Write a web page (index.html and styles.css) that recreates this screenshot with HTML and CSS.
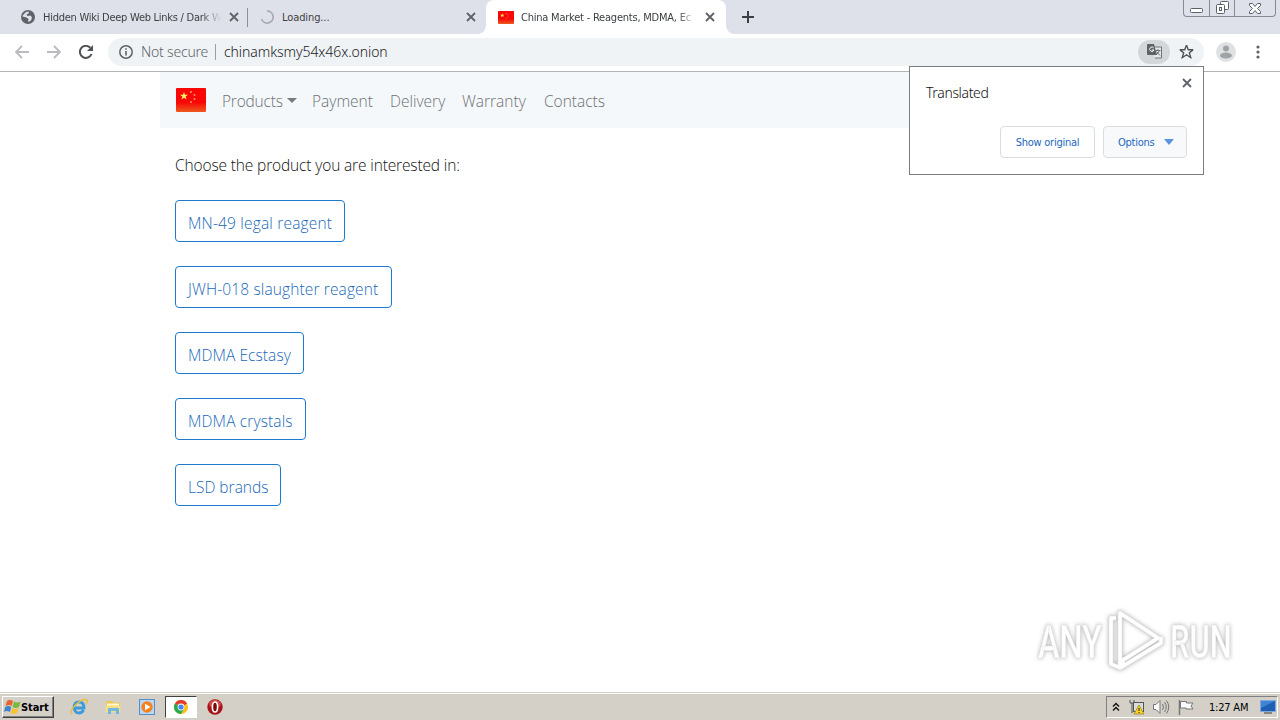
FILE: index.html
```html
<!DOCTYPE html>
<html lang="en">
<head>
    <meta charset="UTF-8">
    <title>China Market - Reagents, MDMA, Ecstasy</title>
    <link rel="stylesheet" href="styles.css">
</head>
<body>
    <svg class="defs" width="0" height="0">
        <symbol id="close" viewBox="0 0 10 10"><path d="M1 1l8 8M9 1l-8 8" stroke="#5f6368" stroke-width="1.8"/></symbol>
        <symbol id="star" viewBox="0 0 20 20"><path d="M10 0l2.6 7H20l-5.9 4.4 2.2 7.2L10 14.300l-6.300 4.300 2.200-7.200L0 7h7.400z"/></symbol>
        <linearGradient id="red" x2="0" y2="1"><stop offset=".6" stop-color="#f90606"/><stop offset="1" stop-color="#ee5a20"/></linearGradient>
        <symbol id="flag" viewBox="0 0 30 24">
            <rect width="30" height="24" rx="1" fill="url(#red)"/>
            <use href="#star" x="4" y="4" width="8" height="8" fill="#ffee60"/>
            <g fill="#ff9a50"><circle cx="15" cy="4" r="1"/><circle cx="18.500" cy="7" r="1"/><circle cx="18.500" cy="11" r="1"/><circle cx="15" cy="14" r="1"/></g>
        </symbol>
    </svg>

    <div class="tabstrip">
        <div class="tab tab-first">
            <svg class="favicon" viewBox="0 0 14 14"><circle cx="7" cy="7" r="7" fill="#5f6368"/><path d="M2 5l3-3 3-.5-.5 2-2 1 1 1.500 3-.5 1.500 2-1 3-3 1.500.5-3-2-1.500-2-.5-2-.5z" fill="#dee1e9"/></svg>
            <span class="tab-title fade">Hidden Wiki Deep Web Links / Dark W</span>
            <svg class="close"><use href="#close"/></svg>
        </div>
        <div class="tab tab-loading">
            <svg class="favicon" viewBox="0 0 14 14"><path d="M7 1a6 6 0 1 1-5.500 8" fill="none" stroke="#a9adb3" stroke-width="1.800"/></svg>
            <span class="tab-title">Loading...</span>
            <svg class="close"><use href="#close"/></svg>
        </div>
        <div class="tab tab-active">
            <svg class="favicon-flag"><use href="#flag"/></svg>
            <span class="tab-title fade">China Market - Reagents, MDMA, Ec</span>
            <svg class="close"><use href="#close"/></svg>
        </div>
        <svg class="new-tab" viewBox="0 0 12 12"><path d="M6 0v12M0 6h12" stroke="#3c4043" stroke-width="2"/></svg>
        <div class="window-buttons">
            <span><svg width="13" height="6"><rect x=".5" y=".5" width="12" height="4" rx="1" fill="#fff" stroke="#5c6069"/></svg></span>
            <span><svg width="13" height="13" fill="#fff" stroke="#5c6069"><rect x="4.500" y=".5" width="8" height="8" rx="1"/><rect x=".5" y="3.500" width="8" height="9" rx="1"/><rect x="3.500" y="6.500" width="2" height="3"/></svg></span>
            <span><svg width="12" height="11"><path d="M.5.5h3L6 3.500 8.500.5h3v2l-3 3 3 3v2h-3L6 7.500 3.500 10.500h-3v-2l3-3-3-3z" fill="#fff" stroke="#5c6069"/></svg></span>
        </div>
    </div>

    <div class="toolbar">
        <svg class="nav-icon" viewBox="0 0 14 14"><path d="M14 7H1M7 1L1 7l6 6" class="arrow"/></svg>
        <svg class="nav-icon" viewBox="0 0 14 14"><path d="M0 7h13M7 1l6 6-6 6" class="arrow"/></svg>
        <svg class="nav-icon" viewBox="0 0 14 14"><path d="M12.500 9A6 6 0 1 1 11.300 2.800" fill="none" stroke="#4f5357" stroke-width="2"/><path d="M14 0v6H8z" fill="#4f5357"/></svg>
        <div class="omnibox">
            <svg class="info" viewBox="0 0 14 14"><circle cx="7" cy="7" r="6.200" fill="none" stroke="#5f6368" stroke-width="1.500"/><path d="M7 6v4.500M7 3.200v1.600" stroke="#5f6368" stroke-width="1.600"/></svg>
            <span class="not-secure">Not secure</span>
            <span class="url">chinamksmy54x46x.onion</span>
            <span class="translate-chip">
                <svg width="15" height="15" viewBox="0 0 15 15"><path d="M6 3h8.500v11H8" fill="#e4e6e8" stroke="#70757a"/><path d="M8.500 6.500h5M11 5v1.500M12.500 6.500q-1 3-3.500 4M9.500 7.500l3.500 4" stroke="#70757a" fill="none"/><path d="M1 0h6l3 11H1q-1 0-1-1V1q0-1 1-1z" fill="#5f6368"/><path d="M6.800 4A2.200 2.200 0 1 0 7 6H5" fill="none" stroke="#fff"/></svg>
            </span>
            <svg class="bookmark" viewBox="-1 -1 22 21"><use href="#star" width="20" height="20" fill="none" stroke="#4f5357" stroke-width="2"/></svg>
        </div>
        <svg class="avatar" viewBox="0 0 20 20"><circle cx="10" cy="10" r="10" fill="#dfe1e3"/><circle cx="10" cy="6.500" r="3" fill="#a0a3a6"/><ellipse cx="10" cy="13.500" rx="6" ry="3" fill="#a0a3a6"/></svg>
        <svg class="menu" viewBox="0 0 4 14" fill="#5f6368"><circle cx="2" cy="2" r="1.600"/><circle cx="2" cy="7" r="1.600"/><circle cx="2" cy="12" r="1.600"/></svg>
    </div>

    <div class="page">
        <div class="container">
            <nav class="navbar">
                <svg class="brand"><use href="#flag"/></svg>
                <a class="dropdown n1">Products</a>
                <a class="n2">Payment</a>
                <a class="n3">Delivery</a>
                <a class="n4">Warranty</a>
                <a class="n5">Contacts</a>
            </nav>
            <div class="content">
                <p>Choose the product you are interested in:</p>
                <a class="btn b1">MN-49 legal reagent</a>
                <a class="btn b2">JWH-018 slaughter reagent</a>
                <a class="btn b3">MDMA Ecstasy</a>
                <a class="btn b4">MDMA crystals</a>
                <a class="btn b5">LSD brands</a>
            </div>
        </div>
    </div>

    <div class="translate-popup">
        <div class="popup-head">
            <span>Translated</span>
            <svg class="close"><use href="#close"/></svg>
        </div>
        <div class="popup-actions">
            <span class="popup-btn show-original">Show original</span>
            <span class="popup-btn options">Options<i></i></span>
        </div>
    </div>

    <div class="watermark">
        <span class="any">ANY</span>
        <svg width="58" height="64" viewBox="0 0 58 64" fill="none" stroke-linejoin="round">
            <g class="mark-shadow"><path d="M13 4v49l38-24z"/><path d="M9 9H4v46l7 3 7-4M13 53v6l41-25v-6"/></g>
            <g class="mark"><path d="M13 4v49l38-24z"/><path d="M9 9H4v46l7 3 7-4M13 53v6l41-25v-6"/></g>
        </svg>
        <span class="run">RUN</span>
    </div>

    <div class="taskbar">
        <div class="start">
            <svg width="17" height="16" viewBox="0 0 17 16"><path d="M3 2q3-2 6 0L7.500 7Q5 5 1.500 7z" fill="#e8622c"/><path d="M10 2.500q3 2 6.500 0L15 8q-3 2-6.500 0z" fill="#7cb83e"/><path d="M1.200 8q3-2 6 0L6 13q-3-2-6 0z" fill="#3e83d0"/><path d="M8.200 9q3 2 6.500 0L13 14q-3 2-6.300 0z" fill="#f7c331"/></svg>
            <span>Start</span>
        </div>
        <div class="task"><svg width="18" height="18" viewBox="0 0 18 18" fill="none"><path d="M4 10h10q0-6-5-6t-5 6q1 5 5 5 3 0 4.500-3" stroke="#3a9bdc" stroke-width="2.800"/><path d="M2 16Q-1 13 6 6.500T17 2q1 1-1 4" stroke="#e9bf3b" stroke-width="1.500"/></svg></div>
        <div class="task"><svg width="18" height="18" viewBox="0 0 18 18"><path d="M2 3h6l1 1.500h7V14H2z" fill="#e9c95f"/><path d="M3 5.500h12V9H3z" fill="#fff7c6"/><path d="M1.500 7.500h15V14h-15z" fill="#f5dd86"/><path d="M4 16v-5q0-1 1-1h9q1 0 1 1v5h-3v-3H7v3z" fill="#6fb9e0"/></svg></div>
        <div class="task"><svg width="16" height="16" viewBox="0 0 16 16"><rect x=".5" y=".5" width="15" height="15" fill="#b9d7f1" stroke="#548fcb"/><circle cx="8" cy="8" r="5.700" fill="#f48120"/><path d="M6 4.700L11.500 8 6 11.300z" fill="#fff"/></svg></div>
        <div class="task active"><svg width="14" height="14" viewBox="0 0 14 14"><circle cx="7" cy="7" r="7" fill="#fbc116"/><path d="M7 7L.9 3.500A7 7 0 0 1 13.100 3.500z" fill="#e33b2e"/><path d="M7 7L.9 3.500A7 7 0 0 0 7 14l3-5z" fill="#2da94f"/><circle cx="7" cy="7" r="3.400" fill="#fff"/><circle cx="7" cy="7" r="2.600" fill="#4285f4"/></svg></div>
        <div class="task"><svg width="16" height="16" viewBox="0 0 16 16"><circle cx="8" cy="8" r="7.700" fill="#a81319"/><ellipse cx="8" cy="5" rx="6" ry="4" fill="#d04b4b"/><ellipse cx="8" cy="8" rx="2.600" ry="5" fill="#7d080c" stroke="#fff" stroke-width="1.600"/></svg></div>
        <div class="tray">
            <svg width="8" height="10" viewBox="0 0 8 10"><path d="M1 4.500l3-3 3 3M1 8.500l3-3 3 3" fill="none" stroke="#111" stroke-width="1.400"/></svg>
            <svg width="17" height="16" viewBox="0 0 17 16"><path d="M2 1v3h4V1M4 4v10" fill="none" stroke="#555"/><rect x="5.500" y="3.500" width="10" height="9" fill="#d8dcd8" stroke="#555"/><path d="M11 6l5 9H6z" fill="#f8d32a" stroke="#9a8010" stroke-width=".7"/><path d="M11 9v3M11 13v1" stroke="#222"/></svg>
            <svg width="17" height="16" viewBox="0 0 17 16" fill="none" stroke="#777"><path d="M.5 5.500H3l4-4v13l-4-4H.5z" fill="#fafafa"/><path d="M9.500 5q2 3 0 6M11.500 3q3.500 5 0 10M13.500 1.500q4.500 6.500 0 13"/></svg>
            <svg width="16" height="16" viewBox="0 0 16 16"><path d="M1.500 1v15" stroke="#777" stroke-width="1.500"/><path d="M2.500 2.500h6v1.500H15l-2 3 2 3H8V9H2.500z" fill="#fafafa" stroke="#777"/></svg>
            <span class="clock">1:27 AM</span>
            <svg width="16" height="14" viewBox="0 0 16 14"><path d="M.5.500h15v11H.5z" fill="#1d5fb5" stroke="#7ea9dc"/><path d="M1 1h14L1 8z" fill="#3f83d2"/><path d="M4 13h8" stroke="#6b6b6b" stroke-width="1.500"/></svg>
        </div>
    </div>
</body>
</html>
```
FILE: styles.css
```css
* {
    box-sizing: border-box;
}

body {
    margin: 0;
    width: 1280px;
    height: 720px;
    display: flex;
    flex-direction: column;
    background-color: #fff;
    overflow: hidden;
    font-family: "DejaVu Sans Condensed", "DejaVu Sans", sans-serif;
}

svg {
    display: block;
    flex: none;
}

.defs {
    position: absolute;
}

.tabstrip {
    height: 34px;
    display: flex;
    align-items: center;
    background-color: #dee1e9;
    position: relative;
}

.tab {
    display: flex;
    align-items: center;
    height: 34px;
    font-size: 11px;
    color: #3c4043;
}

.tab-first {
    width: 248px;
    padding: 0 11px 0 21px;
    position: relative;
}

.tab-first::after {
    content: "";
    position: absolute;
    right: 0;
    top: 8px;
    width: 1px;
    height: 19px;
    background-color: #8b8e94;
}

.tab-loading {
    width: 238px;
    padding: 0 10px 0 12px;
}

.tab-active {
    width: 240px;
    padding: 0 11px 0 12px;
    background-color: #fff;
    border-radius: 8px 8px 0 0;
    position: relative;
}

.tab-active::before,
.tab-active::after {
    content: "";
    position: absolute;
    bottom: 0;
    width: 8px;
    height: 8px;
}

.tab-active::before {
    left: -8px;
    background: radial-gradient(circle at 0 0, transparent 7.5px, #fff 8px);
}

.tab-active::after {
    right: -8px;
    background: radial-gradient(circle at 100% 0, transparent 7.5px, #fff 8px);
}

.favicon {
    width: 14px;
    height: 14px;
    margin-right: 8px;
}

.favicon-flag {
    width: 16px;
    height: 13px;
    margin-right: 7px;
}

.tab-title {
    flex: 1;
    white-space: nowrap;
    margin-right: 8px;
    letter-spacing: -0.26px;
}

.tab-active .tab-title {
    letter-spacing: -0.22px;
}

.tab-loading .tab-title {
    letter-spacing: -0.1px;
}

.fade {
    -webkit-mask-image: linear-gradient(to right, #000 calc(100% - 20px), transparent);
    mask-image: linear-gradient(to right, #000 calc(100% - 20px), transparent);
}

.close {
    width: 10px;
    height: 10px;
}

.new-tab {
    width: 12px;
    height: 12px;
    margin-left: 16px;
}

.window-buttons {
    display: flex;
    align-self: flex-start;
    margin-left: auto;
    margin-right: 4px;
    height: 17px;
    border: 1px solid #868a93;
    border-top: 0;
    border-radius: 0 0 4px 4px;
}

.window-buttons span {
    width: 25px;
    display: flex;
    justify-content: center;
    align-items: flex-end;
    padding-bottom: 2px;
}

.window-buttons span + span {
    border-left: 1px solid #868a93;
}

.window-buttons span:last-child {
    width: 41px;
    padding-bottom: 2px;
}

.toolbar {
    height: 38px;
    display: flex;
    align-items: center;
    padding: 0 20px 2px 15px;
    border-bottom: 1px solid #b1b5b5;
}

.nav-icon {
    width: 14px;
    height: 14px;
    margin-right: 18px;
}

.arrow {
    fill: none;
    stroke: #b9bbbe;
    stroke-width: 1.8;
}

.omnibox {
    width: 1096px;
    height: 28px;
    margin-left: -3px;
    padding: 0 10px 0 11px;
    display: flex;
    align-items: center;
    border-radius: 14px;
    background-color: #f0f3f5;
    font-family: "Noto Sans", sans-serif;
    font-size: 14px;
    font-weight: 300;
}

.info {
    width: 14px;
    height: 14px;
    margin-right: 8px;
}

.not-secure {
    color: #5f6368;
    width: 75px;
    white-space: nowrap;
    border-right: 1px solid #9a9da1;
    line-height: 16px;
    letter-spacing: -0.2px;
}

.url {
    color: #202124;
    margin-left: 8px;
    letter-spacing: -0.07px;
}

.translate-chip {
    width: 32px;
    height: 24px;
    margin-left: auto;
    margin-right: 9px;
    display: flex;
    align-items: center;
    justify-content: center;
    border-radius: 12px;
    background-color: #d4d7da;
}

.bookmark {
    width: 15px;
    height: 15px;
}

.avatar {
    width: 20px;
    height: 20px;
    margin-left: 12px;
}

.menu {
    width: 4px;
    height: 14px;
    margin-left: auto;
}

.page {
    flex: 1;
    font-family: "Open Sans", "Noto Sans", sans-serif;
    font-size: 16px;
    font-weight: 300;
    color: #212529;
}

.container {
    width: 960px;
    margin: 0 auto;
}

.navbar {
    height: 56px;
    display: flex;
    align-items: center;
    padding-left: 16px;
    background-color: #f4f8fb;
    color: #6f7173;
}

.navbar a {
    margin-right: 15px;
    white-space: nowrap;
    line-height: 24px;
    padding-top: 1px;
    font-size: 15.5px;
}

.brand {
    width: 30px;
    height: 24px;
    margin-right: 16px;
}

.dropdown {
    display: flex;
    align-items: center;
}

.dropdown::after {
    content: "";
    margin-left: auto;
    border: 5px solid transparent;
    border-top-color: #77797b;
    border-bottom: 0;
}

.n1 { width: 75px; letter-spacing: -0.2px; }
.n2 { width: 63px; }
.n3 { width: 57px; }
.n4 { width: 67px; }
.n5 { width: 60px; }

.content {
    display: flex;
    flex-direction: column;
    align-items: flex-start;
    gap: 24px;
    padding: 25px 15px;
}

.content p {
    margin: 0;
    height: 23px;
    line-height: 24px;
    font-size: 15.5px;
    letter-spacing: -0.14px;
    color: #111;
}

.btn {
    height: 42px;
    padding: 6px 12px 0;
    border: 1px solid #1e78cf;
    border-radius: 4px;
    color: #2068b8;
    font-size: 15.5px;
    line-height: 33px;
    white-space: nowrap;
}

.b1 { width: 170px; letter-spacing: 0.18px; }
.b2 { width: 217px; letter-spacing: 0.13px; }
.b3 { width: 129px; letter-spacing: 0.08px; }
.b4 { width: 131px; letter-spacing: 0.14px; }
.b5 { width: 106px; }

.translate-popup {
    position: absolute;
    left: 909px;
    top: 66px;
    width: 295px;
    height: 109px;
    padding: 11px 16px 16px;
    display: flex;
    flex-direction: column;
    justify-content: space-between;
    border: 1px solid #7c7c7c;
    background-color: #fff;
}

.popup-head {
    display: flex;
    justify-content: space-between;
    margin-right: -5px;
    font-family: "Noto Sans", sans-serif;
    font-size: 14px;
    font-weight: 300;
    letter-spacing: -0.36px;
    color: #111;
}

.popup-head span {
    padding-top: 5px;
}

.popup-actions {
    display: flex;
    justify-content: flex-end;
    gap: 8px;
}

.popup-btn {
    height: 32px;
    display: flex;
    align-items: center;
    justify-content: center;
    border: 1px solid #dadce0;
    border-radius: 4px;
    font-size: 11px;
    letter-spacing: -0.25px;
    color: #2068c0;
    white-space: nowrap;
}

.show-original {
    width: 95px;
}

.options {
    width: 84px;
    padding: 0 12px 0 14px;
    justify-content: space-between;
    background-color: #f8f9fa;
}

.options i {
    border: 5px solid transparent;
    border-top: 6px solid #5b95e0;
    border-bottom: 0;
}

.watermark {
    position: absolute;
    left: 1038px;
    top: 609px;
    width: 196px;
    height: 64px;
    display: flex;
    align-items: center;
    justify-content: space-between;
    font-family: Roboto, sans-serif;
    font-size: 47px;
    font-weight: 500;
    color: #fff;
    filter: drop-shadow(0 0 2px rgba(0, 0, 0, 0.32));
}

.watermark span {
    width: 64px;
    transform-origin: left center;
    -webkit-text-stroke: 0.5px #e2e2e2;
}

.any {
    transform: scaleX(0.69);
}

.run {
    transform: scaleX(0.66);
}

.mark-shadow {
    stroke: #ddd;
    stroke-width: 5px;
}

.mark {
    stroke: #fff;
    stroke-width: 3.5px;
}

.taskbar {
    height: 28px;
    display: flex;
    align-items: center;
    padding: 1px 2px 0;
    background-color: #d4d0c8;
    border-top: 1px solid #d4d0c8;
    box-shadow: inset 0 1px #fff;
}

.start {
    width: 52px;
    height: 22px;
    margin-right: 9px;
    padding-left: 1px;
    display: flex;
    align-items: center;
    border: 1px solid;
    border-color: #fff #404040 #404040 #fff;
    box-shadow: inset -1px -1px #808080;
    font-size: 11px;
    font-weight: bold;
    color: #000;
}

.start span {
    letter-spacing: -0.1px;
}

.task {
    width: 32px;
    height: 22px;
    margin-right: 2px;
    display: flex;
    align-items: center;
    justify-content: center;
}

.task.active {
    background-color: #fff;
    border: 1px solid;
    border-color: #404040 #fff #fff #404040;
}

.tray {
    width: 172px;
    height: 22px;
    margin-left: auto;
    padding: 0 1px 0 5px;
    display: flex;
    align-items: center;
    gap: 8px;
    border: 1px solid;
    border-color: #808080 #fff #fff #808080;
}

.clock {
    width: 42px;
    margin-left: auto;
    margin-right: 1px;
    font-size: 11px;
    letter-spacing: -0.2px;
    color: #000;
    white-space: nowrap;
}
```
